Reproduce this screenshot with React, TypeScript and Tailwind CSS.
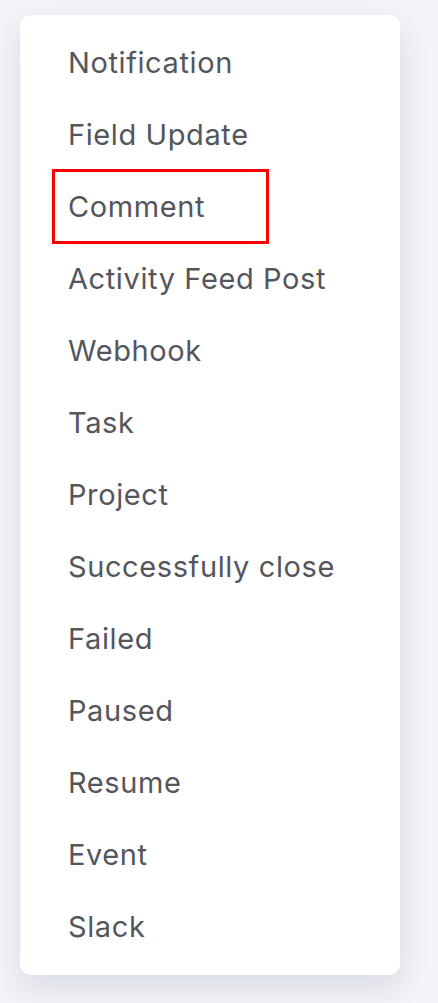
const items = [
  "Notification",
  "Field Update",
  "Comment",
  "Activity Feed Post",
  "Webhook",
  "Task",
  "Project",
  "Successfully close",
  "Failed",
  "Paused",
  "Resume",
  "Event",
  "Slack",
];

export default function App() {
  return (
    <div className="min-h-[1003px] w-full bg-[#f3f4f8] pt-[15px] pl-[20px] font-['Inter',sans-serif]">
      <div className="w-[380px] rounded-[11px] bg-white py-[12px] shadow-[0_12px_30px_rgba(40,50,100,0.13)]">
        <ul className="flex flex-col">
          {items.map((label) => (
            <li
              key={label}
              className="relative flex h-[72px] items-center pl-[48px] text-[29px] tracking-[0.6px] text-[#54565c]">
              {label === "Comment" && (
                <span className="pointer-events-none absolute left-[32px] top-[-2px] h-[75px] w-[217px] border-[3px] border-[#ff0000]" />
              )}
              {label}
            </li>
          ))}
        </ul>
      </div>
    </div>
  );
}
